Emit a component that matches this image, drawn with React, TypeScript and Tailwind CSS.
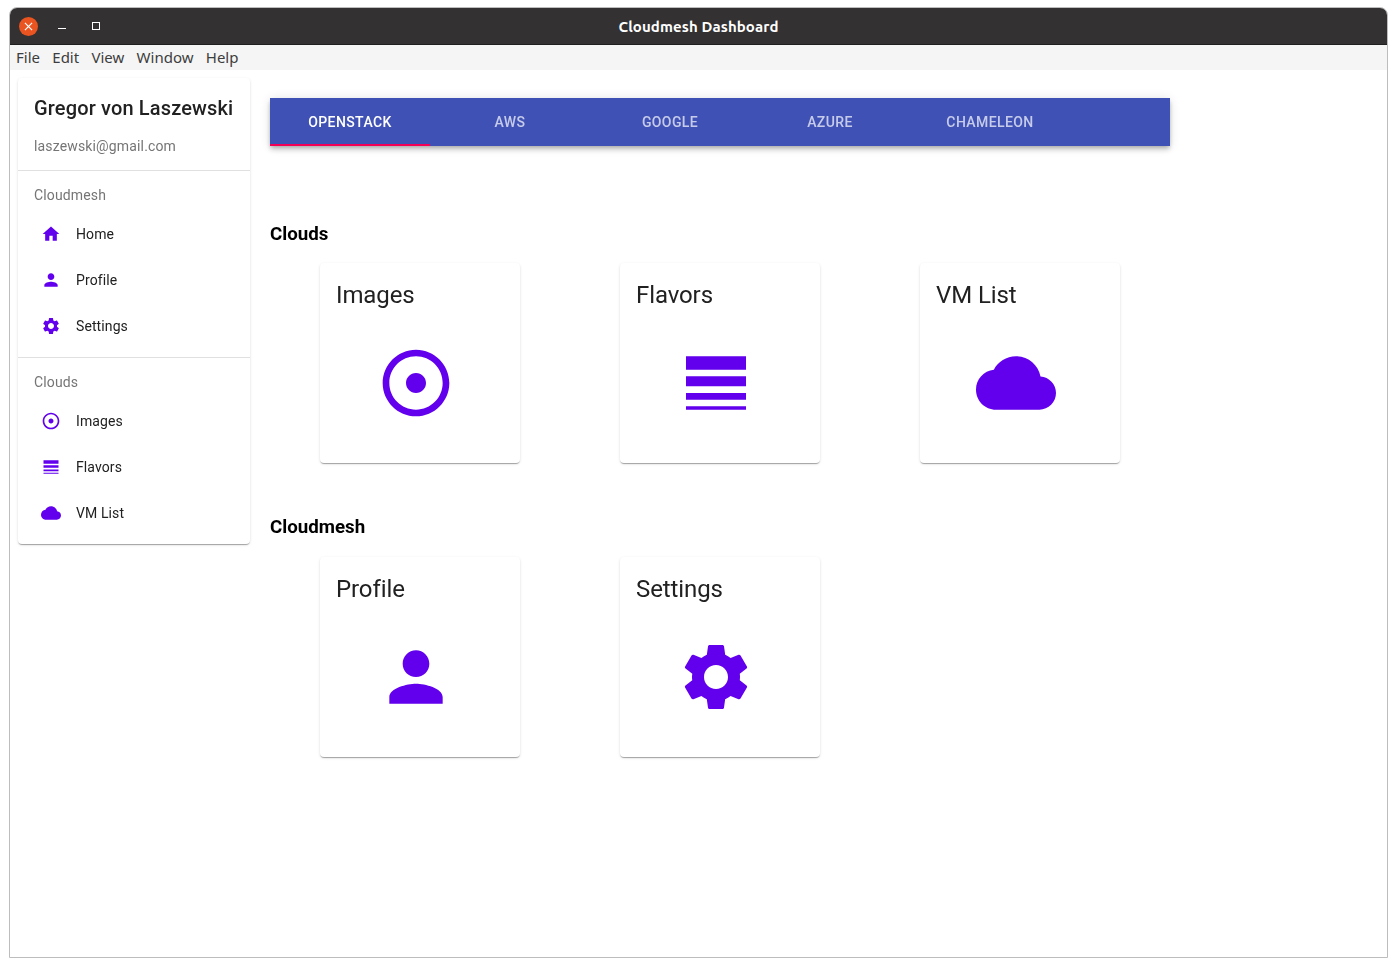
import type { ReactNode } from 'react'

const paths = {
  home: 'M10 20v-6h4v6h5v-8h3L12 3 2 12h3v8z',
  person:
    'M12 12c2.21 0 4-1.79 4-4s-1.79-4-4-4-4 1.79-4 4 1.79 4 4 4zm0 2c-2.67 0-8 1.34-8 4v2h16v-2c0-2.66-5.33-4-8-4z',
  settings:
    'M19.14 12.94c.04-.3.06-.61.06-.94 0-.32-.02-.64-.07-.94l2.03-1.58c.18-.14.23-.41.12-.61l-1.92-3.32c-.12-.22-.37-.29-.59-.22l-2.39.96c-.5-.38-1.03-.7-1.62-.94l-.36-2.54c-.04-.24-.24-.41-.48-.41h-3.84c-.24 0-.43.17-.47.41l-.36 2.54c-.59.24-1.13.57-1.62.94l-2.39-.96c-.22-.08-.47 0-.59.22L2.74 8.87c-.12.21-.08.47.12.61l2.03 1.58c-.05.3-.09.63-.09.94s.02.64.07.94l-2.03 1.58c-.18.14-.23.41-.12.61l1.92 3.32c.12.22.37.29.59.22l2.39-.96c.5.38 1.03.7 1.62.94l.36 2.54c.05.24.24.41.48.41h3.84c.24 0 .44-.17.47-.41l.36-2.54c.59-.24 1.13-.56 1.62-.94l2.39.96c.22.08.47 0 .59-.22l1.92-3.32c.12-.22.07-.47-.12-.61l-2.01-1.58zM12 15.6c-1.98 0-3.6-1.62-3.6-3.6s1.62-3.6 3.6-3.6 3.6 1.62 3.6 3.6-1.62 3.6-3.6 3.6z',
  adjust:
    'M12 2C6.49 2 2 6.49 2 12s4.49 10 10 10 10-4.49 10-10S17.51 2 12 2zm0 18c-4.41 0-8-3.59-8-8s3.59-8 8-8 8 3.59 8 8-3.59 8-8 8zm3-8c0 1.66-1.34 3-3 3s-3-1.34-3-3 1.34-3 3-3 3 1.34 3 3z',
  flavors: 'M3 4h18v4H3zM3 10h18v3H3zM3 15h18v2H3zM3 19h18v1H3z',
  cloud:
    'M19.35 10.04C18.67 6.59 15.64 4 12 4 9.11 4 6.6 5.64 5.35 8.04 2.34 8.36 0 10.91 0 14c0 3.31 2.69 6 6 6h13c2.76 0 5-2.24 5-5 0-2.64-2.05-4.78-4.65-4.96z',
}

type IconName = keyof typeof paths

const Icon = ({ name, className }: { name: IconName; className: string }) => (
  <svg viewBox="0 0 24 24" className={className} fill="#6200ee">
    <path d={paths[name]} />
  </svg>
)

const NavItem = ({ icon, label }: { icon: IconName; label: string }) => (
  <div className="flex h-[46px] items-center pl-[23px]">
    <span className="flex w-[35px] shrink-0">
      <Icon name={icon} className="h-5 w-5 shrink-0" />
    </span>
    <span className="text-sm tracking-[0.1px] text-[#212121]">{label}</span>
  </div>
)

const Card = ({ title, icon }: { title: string; icon: IconName }) => (
  <div className="h-[200px] w-[200px] rounded bg-white p-4 shadow-[0_2px_1px_-1px_rgba(0,0,0,0.2),0_1px_1px_0_rgba(0,0,0,0.14),0_1px_3px_0_rgba(0,0,0,0.12)]">
    <h3 className="text-2xl leading-8 tracking-[-0.1px] text-[#212121]">{title}</h3>
    <Icon name={icon} className="ml-10 mt-[32px] h-20 w-20" />
  </div>
)

const Section = ({ title, rowClass, children }: { title: string; rowClass: string; children: ReactNode }) => (
  <section>
    <h2 className="text-[18.72px] font-bold leading-[26px] text-black">{title}</h2>
    <div className={rowClass}>{children}</div>
  </section>
)

export default function App() {
  const tabs = ['OPENSTACK', 'AWS', 'GOOGLE', 'AZURE', 'CHAMELEON']

  return (
    <div className="h-[967px] w-[1397px] bg-white px-[9px] pb-[9px] pt-[7px] font-['Roboto',sans-serif]">
      <div className="flex h-full flex-col overflow-hidden rounded-t-lg border border-[#bdbdbd]">
        {/* Title bar */}
        <div className="relative flex h-[37px] shrink-0 items-center justify-center border-b border-[#1f1f1f] bg-[#333131] pt-[2px]">
          <div className="absolute left-[9px] top-[9px] flex h-[19px] w-[19px] items-center justify-center rounded-full bg-[#e95420]">
            <svg viewBox="0 0 10 10" className="h-[9px] w-[9px]" stroke="white" strokeWidth="1.3">
              <path d="M1 1l8 8M9 1l-8 8" />
            </svg>
          </div>
          <div className="absolute left-[48px] top-[20px] h-px w-2 bg-white" />
          <div className="absolute left-[82px] top-[14px] h-2 w-2 border border-white" />
          <span className="font-['Ubuntu','Noto_Sans',sans-serif] text-[15px] font-bold tracking-[0.1px] text-white">
            Cloudmesh Dashboard
          </span>
        </div>

        {/* Menu bar */}
        <div className="flex h-[25px] shrink-0 items-center gap-[12.3px] bg-[#f5f5f5] pl-[6px] font-['Noto_Sans',sans-serif] text-[15px] text-[#3d3d3d]">
          <span>File</span>
          <span>Edit</span>
          <span>View</span>
          <span>Window</span>
          <span>Help</span>
        </div>

        <div className="flex min-h-0 flex-1 items-start bg-white pl-2 pt-2">
          {/* Sidebar */}
          <aside className="w-[232px] shrink-0 rounded bg-white shadow-[0_2px_1px_-1px_rgba(0,0,0,0.2),0_1px_1px_0_rgba(0,0,0,0.14),0_1px_3px_0_rgba(0,0,0,0.12)] will-change-transform">
            <div className="h-[93px] border-b border-[#e0e0e0] px-4 pt-4">
              <div className="whitespace-nowrap text-xl font-medium leading-7 tracking-[0.15px] text-[#212121]">
                Gregor von Laszewski
              </div>
              <div className="mt-[14px] text-sm leading-5 tracking-[0.15px] text-[#757575]">laszewski@gmail.com</div>
            </div>
            <div className="h-[187px] border-b border-[#e0e0e0]">
              <div className="flex h-[38px] items-end px-4 pb-1 text-sm leading-5 tracking-[0.15px] text-[#757575]">
                Cloudmesh
              </div>
              <div className="mt-[2px]">
                <NavItem icon="home" label="Home" />
                <NavItem icon="person" label="Profile" />
                <NavItem icon="settings" label="Settings" />
              </div>
            </div>
            <div className="h-[186px]">
              <div className="flex h-[38px] items-end px-4 pb-1 text-sm leading-5 tracking-[0.15px] text-[#757575]">
                Clouds
              </div>
              <div className="mt-[2px]">
                <NavItem icon="adjust" label="Images" />
                <NavItem icon="flavors" label="Flavors" />
                <NavItem icon="cloud" label="VM List" />
              </div>
            </div>
          </aside>

          {/* Main */}
          <main className="ml-5 pt-5 will-change-transform">
            <div className="flex h-12 w-[900px] bg-[#3f51b5] shadow-[0_2px_4px_-1px_rgba(0,0,0,0.2),0_4px_5px_0_rgba(0,0,0,0.14),0_1px_10px_0_rgba(0,0,0,0.12)]">
              {tabs.map((tab, i) => (
                <div
                  key={tab}
                  className={
                    i === 0
                      ? 'flex w-40 items-center justify-center border-y-2 border-t-transparent border-b-[#f50057] text-sm font-medium tracking-[0.4px] text-white'
                      : 'flex w-40 items-center justify-center text-sm font-medium tracking-[0.4px] text-white/70'
                  }
                >
                  {tab}
                </div>
              ))}
            </div>

            <div className="mt-[75px]">
              <Section title="Clouds" rowClass="flex gap-[100px] pl-[50px] pt-4">
                <Card title="Images" icon="adjust" />
                <Card title="Flavors" icon="flavors" />
                <Card title="VM List" icon="cloud" />
              </Section>
            </div>
            <div className="mt-[51px]">
              <Section title="Cloudmesh" rowClass="flex gap-[100px] pl-[50px] pt-[17px]">
                <Card title="Profile" icon="person" />
                <Card title="Settings" icon="settings" />
              </Section>
            </div>
          </main>
        </div>
      </div>
    </div>
  )
}
